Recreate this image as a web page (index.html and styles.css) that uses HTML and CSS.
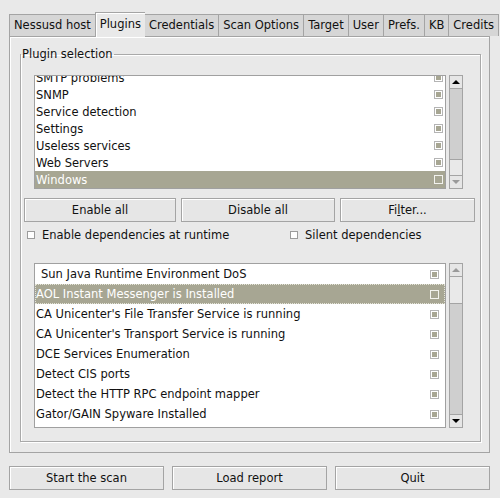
FILE: index.html
```html
<!DOCTYPE html>
<html lang="en">
<head>
<meta charset="UTF-8">
<title>Nessus - Plugins</title>
<link rel="stylesheet" href="styles.css">
</head>
<body>
<div class="window">
  <div class="tabs">
    <div class="tab">Nessusd host</div>
    <div class="tab active">Plugins</div>
    <div class="tab">Credentials</div>
    <div class="tab">Scan Options</div>
    <div class="tab">Target</div>
    <div class="tab">User</div>
    <div class="tab">Prefs.</div>
    <div class="tab">KB</div>
    <div class="tab">Credits</div>
  </div>

  <div class="page">
    <fieldset class="frame">
      <legend>Plugin selection</legend>

      <div class="listbox families">
        <div class="list">
          <ul class="rows">
            <li>SMTP problems <span class="check"></span></li>
            <li>SNMP <span class="check"></span></li>
            <li>Service detection <span class="check"></span></li>
            <li>Settings <span class="check"></span></li>
            <li>Useless services <span class="check"></span></li>
            <li>Web Servers <span class="check"></span></li>
            <li class="selected">Windows <span class="check off"></span></li>
          </ul>
        </div>
        <div class="scrollbar">
          <div class="arrow up"></div>
          <div class="trough bottom"><div class="thumb"></div></div>
          <div class="arrow down dim"></div>
        </div>
      </div>

      <div class="actions">
        <button>Enable all</button>
        <button>Disable all</button>
        <button>Fi<u>l</u>ter...</button>
      </div>

      <div class="options">
        <label><span class="box"></span>Enable dependencies at runtime</label>
        <label><span class="box"></span>Silent dependencies</label>
      </div>

      <div class="listbox plugins">
        <div class="list">
          <ul class="rows">
            <li class="first">Sun Java Runtime Environment DoS <span class="check"></span></li>
            <li class="selected focus">AOL Instant Messenger is Installed <span class="check off"></span></li>
            <li>CA Unicenter's File Transfer Service is running <span class="check"></span></li>
            <li>CA Unicenter's Transport Service is running <span class="check"></span></li>
            <li>DCE Services Enumeration <span class="check"></span></li>
            <li>Detect CIS ports <span class="check"></span></li>
            <li>Detect the HTTP RPC endpoint mapper <span class="check"></span></li>
            <li>Gator/GAIN Spyware Installed <span class="check"></span></li>
          </ul>
        </div>
        <div class="scrollbar">
          <div class="arrow up dim"></div>
          <div class="trough"><div class="thumb"></div></div>
          <div class="arrow down"></div>
        </div>
      </div>
    </fieldset>
  </div>

  <div class="footer">
    <button>Start the scan</button>
    <button>Load report</button>
    <button>Quit</button>
  </div>
</div>
</body>
</html>
```

FILE: styles.css
```css
body {
  margin: 0;
  background-color: #e9e9e9;
  font-family: "DejaVu Sans", sans-serif;
  font-size: 11.5px;
  color: #111;
}

.window {
  padding: 12px 10px 0 9px;
}

/* notebook tabs */
.tabs {
  display: flex;
  align-items: flex-end;
  height: 24px;
}

.tab {
  box-sizing: border-box;
  height: 22px;
  line-height: 21px;
  padding: 0 4px;
  background-color: #d6d6d6;
  border: 1px solid #a4a4a4;
  border-bottom: none;
  border-right: none;
  white-space: nowrap;
}

.tab:last-child {
  flex: 1;
  border-right: 1px solid #a4a4a4;
}

.tab.active {
  position: relative;
  height: 25px;
  margin-bottom: -1px;
  line-height: 23px;
  background-color: #e9e9e9;
  box-shadow: inset 1px 1px 0 #fff;
}

.tab.active + .tab {
  border-left: none;
}

.page {
  box-sizing: border-box;
  height: 417px;
  padding: 10px 8px 9px 10px;
  border: 1px solid #a4a4a4;
  box-shadow: inset 1px 1px 0 #fff;
}

/* frame */
.frame {
  margin: 0;
  padding: 0 4px 13px 3px;
  border: 1px solid #a9a9a9;
  box-shadow: 1px 1px 0 #fff, inset 1px 1px 0 #fff;
}

.frame legend {
  margin-left: -3px;
  padding: 0 1px;
  line-height: 14px;
}

/* lists */
.listbox {
  display: flex;
  gap: 3px;
  margin: 14px 13px 0 10px;
}

.families {
  height: 114px;
}

.plugins {
  height: 165px;
  margin-top: 20px;
}

.list {
  flex: 1;
  overflow: hidden;
  background-color: #fff;
  border: 1px solid #a0a0a0;
}

.rows {
  list-style: none;
  margin: 0;
  padding: 0;
}

.rows li {
  display: flex;
  justify-content: space-between;
  align-items: center;
  padding: 0 2px 0 1px;
  white-space: nowrap;
}

.families .rows {
  margin-top: -7px;
}

.families .rows li {
  height: 17px;
}

.plugins .rows li {
  height: 20px;
  padding-right: 6px;
}

.plugins .rows li.first {
  padding-left: 6px;
}

.rows li.selected {
  background-color: #a7a693;
  color: #fff;
}

.rows li.focus {
  outline: 1px dotted #e4e4d8;
  outline-offset: -1px;
}

.check {
  width: 7px;
  height: 7px;
  border: 1px solid #b4b4b4;
  background-color: #a7a693;
  box-shadow: inset 0 0 0 1px #fff;
}

.check.off {
  border-color: #f2f2ee;
  background-color: transparent;
  box-shadow: none;
}

/* scrollbars */
.scrollbar {
  box-sizing: border-box;
  width: 14px;
  display: flex;
  flex-direction: column;
  border: 1px solid #a4a4a4;
  background-color: #cfcfcf;
}

.arrow {
  height: 12px;
  display: flex;
  align-items: center;
  justify-content: center;
  background-color: #e6e6e6;
  border-bottom: 1px solid #a4a4a4;
}

.arrow.down {
  border-bottom: none;
  border-top: 1px solid #a4a4a4;
}

.arrow::after {
  content: "";
  border-left: 4px solid transparent;
  border-right: 4px solid transparent;
}

.arrow.up::after {
  border-bottom: 4px solid #000;
}

.arrow.down::after {
  border-top: 4px solid #000;
}

.arrow.dim.up::after {
  border-bottom-color: #9a9a9a;
}

.arrow.dim.down::after {
  border-top-color: #9a9a9a;
}

.trough {
  flex: 1;
  display: flex;
  flex-direction: column;
}

.trough.bottom {
  justify-content: flex-end;
}

.families .thumb {
  height: 15px;
}

.plugins .thumb {
  height: 26px;
}

.thumb {
  background-color: #e9e9e9;
  border-bottom: 1px solid #a4a4a4;
}

.trough.bottom .thumb {
  border-bottom: none;
  border-top: 1px solid #a4a4a4;
}

/* buttons */
button {
  box-sizing: border-box;
  height: 24px;
  margin: 0;
  padding: 0;
  font-family: inherit;
  font-size: 11.5px;
  color: #111;
  background-color: #e6e6e6;
  border: 1px solid #a4a4a4;
  box-shadow: inset 1px 1px 0 #fff;
}

.actions {
  display: grid;
  grid-template-columns: 152px 154px 135px;
  column-gap: 5px;
  margin-top: 9px;
}

.actions u {
  text-decoration: underline;
  text-underline-offset: 1px;
}

.options {
  display: grid;
  grid-template-columns: 263px 1fr;
  height: 16px;
  margin-top: 5px;
  line-height: 16px;
}

.options label {
  display: flex;
  align-items: center;
  padding-left: 3px;
}

.box {
  width: 6px;
  height: 6px;
  margin-right: 7px;
  border: 1px solid #9c9c9c;
  background-color: #fff;
}

.footer {
  display: grid;
  grid-template-columns: 1fr 1fr 1fr;
  column-gap: 8px;
  margin-top: 13px;
}
```
